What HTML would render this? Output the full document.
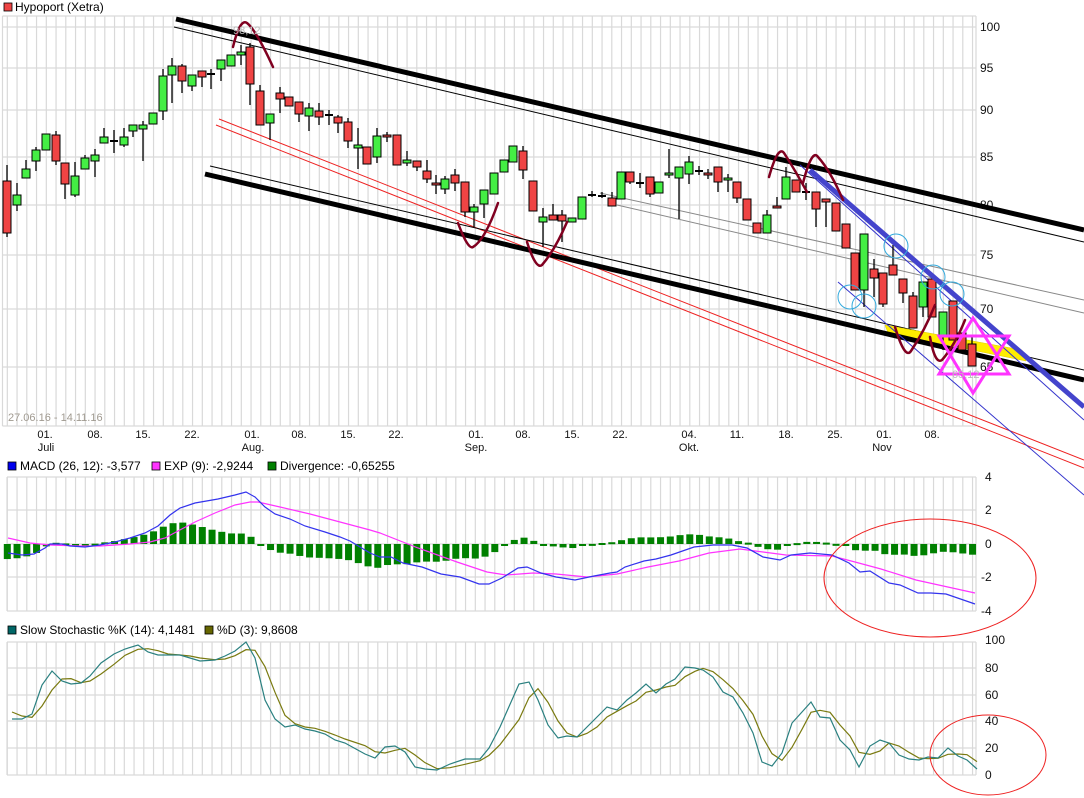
<!DOCTYPE html>
<html><head><meta charset="utf-8">
<style>
html,body{margin:0;padding:0;background:#fff;}
svg{display:block;font-family:"Liberation Sans",Arial,sans-serif;}
</style></head>
<body>
<svg id="s" width="1084" height="798" xmlns="http://www.w3.org/2000/svg">
<g id="grid" stroke="#d9d9d9" stroke-width="1.2" fill="none"></g>
<!-- labels -->
<rect x="4" y="3" width="8" height="8" fill="#ee4444" stroke="#000" stroke-width="0.8"/>
<text x="15" y="11" font-size="12" fill="#000">Hypoport (Xetra)</text>
<g font-size="12" fill="#111">
<text x="980" y="31">100</text><text x="980" y="72">95</text><text x="980" y="114">90</text>
<text x="980" y="161">85</text><text x="980" y="209">80</text><text x="980" y="259">75</text>
<text x="980" y="313">70</text><text x="980" y="371">65</text>
<text x="985" y="481">4</text><text x="985" y="514">2</text><text x="985" y="548">0</text>
<text x="981" y="581">-2</text><text x="981" y="615">-4</text>
<text x="985" y="644">100</text><text x="985" y="672">80</text><text x="985" y="699">60</text>
<text x="985" y="725">40</text><text x="985" y="752">20</text><text x="985" y="779">0</text>
</g>
<g font-size="11" fill="#111" text-anchor="middle">
<text x="45" y="438">01.</text><text x="95" y="438">08.</text><text x="143" y="438">15.</text><text x="192" y="438">22.</text>
<text x="252" y="438">01.</text><text x="299" y="438">08.</text><text x="348" y="438">15.</text><text x="396" y="438">22.</text>
<text x="476" y="438">01.</text><text x="523" y="438">08.</text><text x="572" y="438">15.</text><text x="620" y="438">22.</text>
<text x="689" y="438">04.</text><text x="737" y="438">11.</text><text x="786" y="438">18.</text><text x="835" y="438">25.</text>
<text x="884" y="438">01.</text><text x="932" y="438">08.</text>
<text x="46" y="451">Juli</text><text x="253" y="451">Aug.</text><text x="476" y="451">Sep.</text><text x="689" y="451">Okt.</text><text x="882" y="451">Nov</text>
</g>
<text x="8" y="421" font-size="11" fill="#a09a90">27.06.16 - 14.11.16</text>
<rect x="8" y="462" width="8" height="8" fill="#0000ee" stroke="#000" stroke-width="0.8"/>
<text x="20" y="470" font-size="12">MACD (26, 12): -3,577</text>
<rect x="152" y="462" width="8" height="8" fill="#ff33ff" stroke="#000" stroke-width="0.8"/>
<text x="164" y="470" font-size="12">EXP (9): -2,9244</text>
<rect x="268" y="462" width="8" height="8" fill="#008000" stroke="#000" stroke-width="0.8"/>
<text x="280" y="470" font-size="12">Divergence: -0,65255</text>
<rect x="8" y="626" width="8" height="8" fill="#006666" stroke="#000" stroke-width="0.8"/>
<text x="20" y="634" font-size="12">Slow Stochastic %K (14): 4,1481</text>
<rect x="205" y="626" width="8" height="8" fill="#666600" stroke="#000" stroke-width="0.8"/>
<text x="217" y="634" font-size="12">%D (3): 9,8608</text>

<g id="lines1"></g>
<g id="candles"></g>
<g id="overlay"></g>
<g id="macd"></g>
<g id="stoch"></g>
</svg>
<script>
var NS="http://www.w3.org/2000/svg";
function el(p,t,a){var e=document.createElementNS(NS,t);for(var k in a)e.setAttribute(k,a[k]);document.getElementById(p).appendChild(e);return e;}
// grids
function panelGrid(x0,x1,y0,y1,hs){
 for(var i=0;i<100;i++){var x=7.3+9.75*i;el('grid','line',{x1:x,y1:y0,x2:x,y2:y1});}
 el('grid','line',{x1:x0,y1:y0,x2:x0,y2:y1});el('grid','line',{x1:x1,y1:y0,x2:x1,y2:y1});
 el('grid','line',{x1:x0,y1:y0,x2:x1,y2:y0});el('grid','line',{x1:x0,y1:y1,x2:x1,y2:y1});
 hs.forEach(function(y){el('grid','line',{x1:x0,y1:y,x2:x1,y2:y});});
}
panelGrid(2.5,976,16,426,[27,68,110,157,205,255,309,367]);
panelGrid(7,976,477,611,[510,544,577]);
panelGrid(7,976,642,775,[668,695,721,748]);

// trend lines (behind candles)
function L(g,x1,y1,x2,y2,c,w){el(g,'line',{x1:x1,y1:y1,x2:x2,y2:y2,stroke:c,'stroke-width':w});}
L('lines1',219,119,1084,460,'#ee2222',1);
L('lines1',216,125,1084,468,'#ee2222',1);
L('lines1',600,193,1084,300,'#888',1);
L('lines1',617,205,1084,313,'#888',1);
L('lines1',174,27,1084,242,'#000',1);
L('lines1',210,166,1084,370,'#000',1);
el('lines1','polygon',{points:'885,325 1022,350 1026,361 888,333',fill:'#ffee00',stroke:'#ddcc00','stroke-width':0.5});
L('lines1',176,19,1084,230,'#000',5);
L('lines1',205,174,1084,380,'#000',5);
L('lines1',800,165,1084,420,'#3333cc',1);
L('lines1',838,282,1084,495,'#3333cc',1);

var C=[[7,181,233,165,237,'r'],[17,195,205,183,211,'g'],[26,169,178,160,178,'g'],[36,150,161,147,171,'g'],[46,134,150,134,150,'g'],[56,135,161,131,165,'r'],[65,163,184,163,199,'r'],[75,176,195,162,197,'g'],[85,158,169,155,169,'g'],[95,155,161,149,177,'g'],[104,137,143,128,143,'g'],[114,141,141,130,153,'d'],[124,137,145,128,147,'g'],[133,125,131,125,137,'g'],[143,125,129,121,161,'g'],[153,113,124,113,124,'g'],[163,76,111,69,120,'g'],[172,66,75,58,103,'g'],[182,66,81,64,93,'r'],[192,75,86,75,91,'g'],[202,71,77,71,87,'r'],[211,74,74,69,89,'d'],[221,60,69,60,81,'g'],[231,55,66,55,66,'g'],[241,52,55,45,65,'g'],[250,47,84,43,105,'r'],[260,91,125,85,125,'r'],[270,114,123,114,140,'g'],[280,93,99,87,113,'r'],[289,97,106,97,106,'r'],[299,102,114,102,122,'r'],[309,108,116,103,131,'g'],[319,111,117,103,125,'r'],[329,115,115,110,125,'d'],[338,117,123,115,133,'r'],[348,122,141,118,148,'r'],[358,145,148,128,169,'g'],[367,147,164,147,164,'r'],[377,136,157,128,163,'g'],[387,135,137,132,142,'r'],[397,135,165,135,165,'r'],[407,160,163,151,166,'g'],[417,161,167,161,171,'r'],[427,171,179,160,183,'r'],[436,183,185,175,194,'r'],[445,179,189,176,194,'g'],[455,175,183,169,191,'r'],[465,182,212,182,217,'r'],[474,207,212,204,227,'g'],[484,190,204,190,218,'g'],[494,173,194,173,194,'g'],[504,160,172,160,172,'g'],[513,146,162,146,162,'g'],[523,151,170,146,179,'r'],[533,181,211,181,211,'r'],[543,217,222,208,247,'g'],[553,215,220,204,220,'r'],[562,215,221,210,242,'r'],[572,218,222,218,222,'g'],[582,197,219,197,219,'g'],[592,195,195,191,197,'d'],[602,196,196,192,198,'d'],[612,198,206,192,206,'r'],[621,172,199,172,199,'g'],[630,172,182,172,184,'r'],[640,183,183,173,188,'d'],[650,177,194,177,197,'r'],[659,182,193,182,193,'g'],[669,173,175,149,178,'g'],[679,167,178,167,219,'g'],[689,162,174,156,184,'g'],[699,171,171,166,175,'d'],[708,173,175,169,179,'r'],[718,167,182,167,192,'r'],[728,178,179,174,192,'g'],[737,182,198,182,203,'r'],[747,199,220,199,220,'r'],[757,223,233,223,233,'r'],[767,215,233,210,233,'g'],[777,206,207,197,207,'r'],[786,177,199,167,199,'g'],[796,180,192,180,192,'r'],[806,192,192,183,200,'d'],[816,192,209,192,227,'r'],[826,199,202,199,227,'r'],[836,203,231,203,231,'r'],[846,224,248,224,248,'r'],[855,253,290,253,290,'r'],[864,234,290,234,307,'g'],[874,269,278,259,297,'r'],[883,273,304,273,307,'r'],[893,265,275,245,275,'r'],[903,279,293,279,303,'r'],[913,296,328,292,328,'r'],[923,282,307,282,317,'g'],[932,279,317,279,317,'r'],[943,312,335,312,350,'g'],[953,301,340,301,340,'r'],[962,333,350,333,350,'r'],[972,344,366,337,366,'r']];
C.forEach(function(c){
 el('candles','line',{x1:c[0],y1:c[3],x2:c[0],y2:c[4],stroke:'#000','stroke-width':1.3});
 if(c[5]=='d'){el('candles','line',{x1:c[0]-4,y1:c[1],x2:c[0]+4,y2:c[1],stroke:'#000','stroke-width':2});}
 else el('candles','rect',{x:c[0]-4,y:c[1],width:8,height:Math.max(2,c[2]-c[1]),fill:c[5]=='r'?'#ef4444':'#44ee44',stroke:'#000','stroke-width':1});
});

// overlay
L('overlay',810,170,1084,407,'#4444cc',5);
[[896,246],[850,297],[864,306],[933,277],[952,294]].forEach(function(p){el('overlay','circle',{cx:p[0],cy:p[1],r:12,fill:'none',stroke:'#33aadd','stroke-width':1});});
function P(d){el('overlay','path',{d:d,fill:'none',stroke:'#800020','stroke-width':2.5,'stroke-linecap':'round'});}
P('M233,47 Q240,18 247,23 Q256,30 273,67');
P('M458,223 Q468,250 473,247 Q485,240 498,203');
P('M527,242 Q536,270 542,265 Q555,250 567,222');
P('M769,177 Q778,145 784,153 Q795,170 807,192');
P('M803,183 Q812,148 818,157 Q830,170 843,200');
P('M895,327 Q905,360 911,351 Q925,330 935,305');
P('M930,337 Q935,365 942,360 Q955,345 965,320');
el('overlay','polygon',{points:'973,318 1009,374 939,374',fill:'none',stroke:'#ff33ff','stroke-width':3});
el('overlay','polygon',{points:'939,336 1009,336 973,393',fill:'none',stroke:'#ff33ff','stroke-width':3});
var t=el('overlay','text',{x:952,y:378,'font-size':11,fill:'#bbb'});t.textContent='65,12';
var t2=el('overlay','text',{x:233,y:34,'font-size':11,fill:'#bbb'});t2.textContent='98,12';

// MACD
var M=[[8,553],[22,555],[34,554],[45,548],[50,544],[62,544],[70,546],[85,547],[100,545],[115,542],[130,538],[145,533],[158,526],[170,515],[180,508],[195,503],[218,499],[235,495],[246,492],[255,497],[265,507],[275,514],[290,519],[305,526],[325,532],[340,537],[350,541],[370,553],[380,557],[391,557],[403,563],[422,567],[441,574],[460,577],[479,584],[489,584],[502,578],[518,568],[527,567],[541,573],[556,577],[575,580],[594,576],[610,573],[617,572],[625,567],[644,561],[656,559],[671,555],[694,547],[713,545],[732,545],[747,548],[763,557],[780,560],[791,555],[810,553],[832,555],[849,563],[860,572],[870,571],[889,583],[900,585],[918,593],[931,593],[946,594],[975,604]];
var E=[[8,538],[30,543],[50,545],[80,546],[100,546],[130,544],[150,542],[165,538],[178,531],[195,522],[215,513],[235,505],[250,502],[258,502],[280,507],[310,514],[340,522],[370,530],[380,533],[418,548],[457,562],[487,572],[506,575],[533,573],[556,574],[587,577],[617,574],[648,567],[679,561],[709,553],[740,549],[763,552],[786,555],[832,556],[855,562],[881,569],[916,580],[975,593]];
function interp(A,x){for(var i=1;i<A.length;i++){if(x<=A[i][0]){var a=A[i-1],b=A[i];return a[1]+(b[1]-a[1])*(x-a[0])/(b[0]-a[0]);}}return A[A.length-1][1];}
for(var i=0;i<100;i++){var x=7.3+9.75*i;var d=interp(M,x)-interp(E,x);var y0=544,y1=544+d;
 el('macd','rect',{x:x-3.5,y:Math.min(y0,y1),width:7,height:Math.max(2,Math.abs(d)),fill:'#008000'});}
function pl(g,A,c){el(g,'polyline',{points:A.map(function(p){return p.join(',');}).join(' '),fill:'none',stroke:c,'stroke-width':1.2});}
pl('macd',E,'#ff33ff');pl('macd',M,'#3333ee');
el('macd','ellipse',{cx:930,cy:578,rx:106,ry:59,fill:'none',stroke:'#ee2222','stroke-width':1});

// Stoch
var K=[[12,719],[22,719],[32,714],[42,685],[52,671],[62,681],[71,684],[81,683],[90,676],[101,663],[114,654],[125,649],[138,645],[148,652],[158,655],[168,655],[180,655],[190,658],[200,661],[215,660],[225,656],[235,651],[246,642],[255,658],[265,700],[275,719],[285,727],[295,725],[305,729],[315,731],[325,734],[335,740],[345,743],[365,754],[375,758],[385,747],[395,746],[405,752],[415,767],[425,769],[437,770],[450,764],[465,759],[480,759],[489,748],[500,727],[519,684],[529,682],[538,700],[548,725],[558,738],[567,736],[577,737],[587,727],[597,717],[607,707],[617,710],[627,700],[636,693],[646,684],[656,693],[666,684],[675,679],[685,667],[695,668],[703,670],[713,677],[723,692],[733,697],[743,713],[753,733],[762,762],[772,766],[782,753],[792,723],[802,712],[811,702],[820,717],[830,718],[840,740],[850,750],[859,767],[870,746],[880,740],[889,743],[899,755],[909,759],[919,760],[928,757],[938,758],[948,748],[958,756],[967,760],[977,769]];
var D=K.map(function(p,i){var a=K[Math.max(0,i-2)][1],b=K[Math.max(0,i-1)][1];return [p[0],(a+b+p[1])/3];});
D[0]=[12,712];D[1]=[22,716];
pl('stoch',D,'#7a7a10');pl('stoch',K,'#2a8080');
el('stoch','ellipse',{cx:988,cy:755,rx:58,ry:40,fill:'none',stroke:'#ee2222','stroke-width':1});
</script>
</body></html>
